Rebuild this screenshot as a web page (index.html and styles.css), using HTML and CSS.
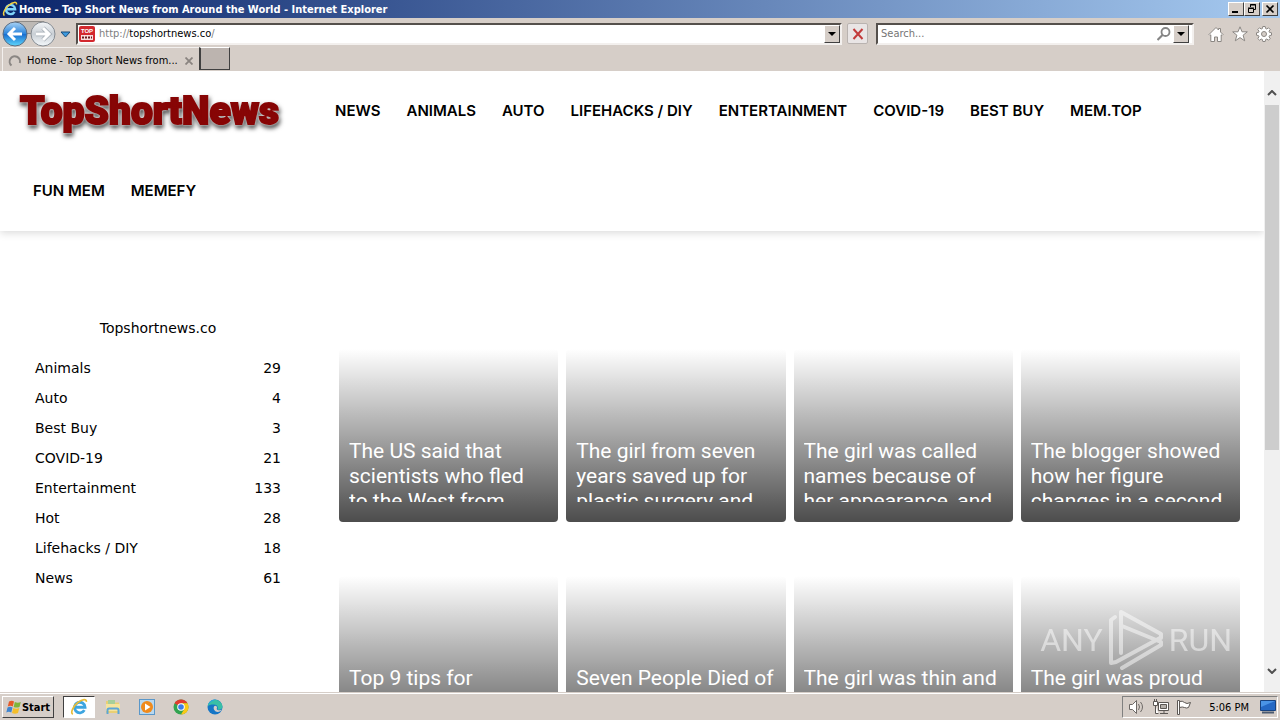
FILE: index.html
```html
<!DOCTYPE html>
<html lang="en">
  <head>
    <meta charset="utf-8" />
    <title>Home - Top Short News from Around the World</title>
    <link rel="stylesheet" href="styles.css">
  </head>

  <body>
    <div class="titlebar">
      <svg class="ie-icon" viewBox="0 0 16 16" width="16" height="16">
        <path d="M12.5 10.8a4.6 4.6 0 1 1 .6-2.6H5" fill="none" stroke="#7fd4fa" stroke-width="2.4" />
        <path d="M2.500 14.500C0 13 3 7 7 4c4-3.200 8-3.600 7.500-.5" fill="none" stroke="#f5d142" stroke-width="1.500" />
      </svg>
      <span class="window-title">Home - Top Short News from Around the World - Internet Explorer</span>
      <div class="window-buttons">
        <button class="win-btn" aria-label="Minimize">
          <svg viewBox="0 0 12 10" width="12" height="10"><path d="M2 7h6v2H2z" /></svg>
        </button>
        <button class="win-btn" aria-label="Restore">
          <svg viewBox="0 0 12 10" width="12" height="10"><path d="M4.500 3V.5h5v5H8M4 1h6M2.500 4.500h5v4h-5zM2 4h6" fill="none" stroke="#000" /></svg>
        </button>
        <button class="win-btn win-close" aria-label="Close">
          <svg viewBox="0 0 12 10" width="12" height="10"><path d="M2.500 1.500l7 7m0-7l-7 7" stroke="#000" stroke-width="1.700" /></svg>
        </button>
      </div>
    </div>

    <div class="toolbar">
      <div class="history">
        <svg viewBox="0 0 74 28" width="74" height="28">
          <defs>
            <linearGradient id="back" x2="0" y2="1">
              <stop offset="0" stop-color="#a9d3f5" />
              <stop offset=".48" stop-color="#2e86dc" />
              <stop offset=".52" stop-color="#1a6fd0" />
              <stop offset="1" stop-color="#5fd8fd" />
            </linearGradient>
            <linearGradient id="fwd" x2="0" y2="1">
              <stop offset="0" stop-color="#f4f6f8" />
              <stop offset=".5" stop-color="#c9cfd5" />
              <stop offset="1" stop-color="#f4f8fb" />
            </linearGradient>
          </defs>
          <path d="M13 1.500h29l-4 12H18z" fill="#bdb9b5" stroke="#918d89" />
          <circle cx="13" cy="14" r="12" fill="url(#back)" stroke="#5c6c80" />
          <path d="M20 14H7m6-6l-6 6 6 6" fill="none" stroke="#fff" stroke-width="3" />
          <circle cx="41" cy="14" r="12" fill="url(#fwd)" stroke="#858b92" />
          <path d="M34 14h13m-6-6l6 6-6 6" fill="none" stroke="#a3abb3" stroke-width="4.500" />
          <path d="M34 14h13m-6-6l6 6-6 6" fill="none" stroke="#fff" stroke-width="3" />
          <path d="M59 12h9l-4.500 5z" fill="#3c9ae0" stroke="#174a78" />
        </svg>
      </div>
      <div class="field address">
        <svg viewBox="0 0 16 16" width="16" height="16">
          <rect width="16" height="16" rx="2" fill="#d3282e" />
          <text x="8" y="7" class="favicon-text">TOP</text>
          <rect x="2" y="9" width="12" height="5" fill="#f7dcdc" />
          <path d="M3 11.500h10" stroke="#6b1a1c" stroke-width="2" stroke-dasharray="2 1" />
        </svg>
        <span class="url" role="textbox" aria-label="Address"><span class="muted">http://</span>topshortnews.co<span class="muted">/</span></span>
        <button class="drop-btn" aria-label="Show address list"><svg viewBox="0 0 8 4" width="8" height="4"><path d="M0 0h8L4 4z" /></svg></button>
      </div>
      <button class="stop-btn" aria-label="Stop">
        <svg viewBox="0 0 12 12" width="12" height="12"><path d="M1.500 1l9 10m0-10l-9 10" stroke="#c23b3b" stroke-width="2" /></svg>
      </button>
      <div class="field search">
        <input type="text" placeholder="Search..." aria-label="Search">
        <svg viewBox="0 0 14 14" width="14" height="14" fill="none" stroke="#858585"><circle cx="8.500" cy="5" r="4" stroke-width="1.800" /><path d="M5.500 8l-5 5" stroke-width="2.200" /></svg>
        <button class="drop-btn" aria-label="Search options"><svg viewBox="0 0 8 4" width="8" height="4"><path d="M0 0h8L4 4z" /></svg></button>
      </div>
      <div class="tools">
        <svg viewBox="0 0 16 16" width="16" height="16"><path d="M1 8.500L8 1.500l2.500 2.500V2.500h2V6L15 8.500l-1 1-.8-.7v6.700H9.500V11h-3v4.500H2.800V8.800l-.8.700z" fill="#fff" stroke="#8b8783" /></svg>
        <svg viewBox="0 0 16 16" width="16" height="16"><path d="M8 .8l2 5h5.300l-4.200 3.400 1.600 5.600L8 11.600l-4.700 3.200 1.600-5.600L.7 5.800H6z" fill="#fff" stroke="#8b8783" /></svg>
        <svg viewBox="0 0 16 16" width="16" height="16" fill="#fff" stroke="#8b8783">
          <path d="M6.800.5h2.400l.4 2 1.200.5 1.700-1.200 1.700 1.700L13 5.200l.5 1.200 2 .4v2.400l-2 .4-.5 1.200 1.200 1.700-1.700 1.700-1.700-1.200-1.200.5-.4 2H6.800l-.4-2-1.200-.5-1.700 1.200-1.700-1.700L3 10.800l-.5-1.200-2-.4V6.800l2-.4L3 5.200 1.800 3.500l1.700-1.700L5.200 3l1.200-.5z" />
          <circle cx="8" cy="8" r="2.500" fill="#d6cec8" />
        </svg>
      </div>
    </div>

    <div class="tabs">
      <div class="tab">
        <svg viewBox="0 0 14 14" width="14" height="14"><path d="M3.500 11.500A5.200 5.200 0 1 1 11.800 9" fill="none" stroke="#8a8683" stroke-width="2" /></svg>
        <span>Home - Top Short News from...</span>
        <button class="tab-close" aria-label="Close tab"><svg viewBox="0 0 8 8" width="8" height="8"><path d="M.5.500l7 7m0-7l-7 7" stroke="#8a8480" stroke-width="1.800" /></svg></button>
      </div>
      <button class="new-tab" aria-label="New tab"></button>
    </div>

    <div class="viewport">
      <div class="page">
        <header class="header">
          <a class="logo" href="#">TopShortNews</a>
          <nav class="menu">
            <a href="#">NEWS</a>
            <a href="#">ANIMALS</a>
            <a href="#">AUTO</a>
            <a href="#">LIFEHACKS / DIY</a>
            <a href="#">ENTERTAINMENT</a>
            <a href="#">COVID-19</a>
            <a href="#">BEST BUY</a>
            <a href="#">MEM.TOP</a>
            <a href="#">FUN MEM</a>
            <a href="#">MEMEFY</a>
          </nav>
        </header>

        <main class="content">
          <aside class="sidebar">
            <h4>Topshortnews.co</h4>
            <ul>
              <li><a href="#">Animals</a><span>29</span></li>
              <li><a href="#">Auto</a><span>4</span></li>
              <li><a href="#">Best Buy</a><span>3</span></li>
              <li><a href="#">COVID-19</a><span>21</span></li>
              <li><a href="#">Entertainment</a><span>133</span></li>
              <li><a href="#">Hot</a><span>28</span></li>
              <li><a href="#">Lifehacks / DIY</a><span>18</span></li>
              <li><a href="#">News</a><span>61</span></li>
            </ul>
          </aside>
          <section class="cards">
            <a class="card" href="#"><h3>The US said that scientists who fled<br>to the West from</h3></a>
            <a class="card" href="#"><h3>The girl from seven years saved up for plastic surgery and</h3></a>
            <a class="card" href="#"><h3>The girl was called names because of her appearance, and</h3></a>
            <a class="card" href="#"><h3>The blogger showed how her figure changes in a second</h3></a>
            <a class="card" href="#"><h3>Top 9 tips for</h3></a>
            <a class="card" href="#"><h3>Seven People Died of</h3></a>
            <a class="card" href="#"><h3>The girl was thin and</h3></a>
            <a class="card" href="#"><h3>The girl was proud</h3></a>
          </section>
        </main>
      </div>

      <div class="scrollbar">
        <svg viewBox="0 0 10 6" width="10" height="6"><path d="M1 5l4-4 4 4" /></svg>
        <div class="thumb"></div>
        <svg viewBox="0 0 10 6" width="10" height="6"><path d="M1 1l4 4 4-4" /></svg>
      </div>

      <div class="watermark">
        <span>ANY</span>
        <svg viewBox="0 0 56 62" width="56" height="62" fill="none" stroke="#fff" stroke-width="4" stroke-linejoin="round" stroke-linecap="round">
          <path d="M7 8L3 11v43l5-1 44-24" />
          <path d="M13 44V3l40 22v4" />
          <path d="M14 17l39 16v3L14 59" />
        </svg>
        <span>RUN</span>
      </div>
    </div>

    <div class="taskbar">
      <button class="start">
        <svg viewBox="0 0 16 16" width="16" height="16">
          <path d="M3 2.500q3-1.500 5 0L6.800 7.500q-2.500-1.300-5 0z" fill="#e65a28" />
          <path d="M8.800 3q3 1.500 6 0l-1.300 5q-3 1.200-5.800 0z" fill="#7fb53a" />
          <path d="M1.500 8.500q2.500-1.300 5 0l-1.200 5q-2.500-1.500-5 0z" fill="#3f85d0" />
          <path d="M7.300 9q3 1.300 6 0L12 14q-3 1.300-6 0z" fill="#f4be2a" />
        </svg>
        Start
      </button>
      <button class="task active" aria-label="Internet Explorer">
        <svg viewBox="0 0 16 16" width="18" height="18">
          <path d="M12.800 10.800a4.700 4.700 0 1 1 .6-2.600H5" fill="none" stroke="#3da5e0" stroke-width="2.500" />
          <path d="M2.500 14.500C0 13 3 7 7 4c4-3.200 8-3.600 7.500-.5" fill="none" stroke="#e8bc38" stroke-width="1.500" />
        </svg>
      </button>
      <button class="task" aria-label="Explorer">
        <svg viewBox="0 0 16 16" width="16" height="16">
          <path d="M1 2h6l1 1.500h6V14H1z" fill="#e9cf74" />
          <path d="M3 1h7v6H3z" fill="#a6cf9a" />
          <path d="M1 5h14v7H1z" fill="#f5e49d" />
          <path d="M2.500 15V11q0-1.500 1.500-1.500h8q1.500 0 1.500 1.500v4" fill="none" stroke="#5ca6d8" stroke-width="2" />
        </svg>
      </button>
      <button class="task" aria-label="Media Player">
        <svg viewBox="0 0 16 16" width="16" height="16">
          <rect x=".5" y=".5" width="15" height="15" fill="#b9d8ef" stroke="#5a97c9" />
          <circle cx="8" cy="8" r="6" fill="#f08a1c" />
          <path d="M6 4.500l5.500 3.500L6 11.500z" fill="#fff" />
        </svg>
      </button>
      <button class="task" aria-label="Chrome">
        <svg viewBox="0 0 16 16" width="16" height="16">
          <circle cx="8" cy="8" r="7.500" fill="#32a350" />
          <path d="M8 8L1.500 4.250A7.500 7.500 0 0 1 14.500 4.250H8z" fill="#e23b2e" />
          <path d="M8 15.500A7.500 7.500 0 0 0 14.500 4.250H8l3.300 5.700z" fill="#fbc916" />
          <circle cx="8" cy="8" r="3.800" fill="#fff" />
          <circle cx="8" cy="8" r="2.800" fill="#3b7de8" />
        </svg>
      </button>
      <button class="task" aria-label="Edge">
        <svg viewBox="0 0 16 16" width="16" height="16">
          <circle cx="8" cy="8" r="7.500" fill="#1676c6" />
          <path d="M.6 7.500a7.500 7.500 0 0 1 14.900 0c0 3-3 3.700-5 3 1-2-.2-5-3.500-5S1.500 6 .6 7.500z" fill="#39bfa6" />
          <path d="M1 6a7.500 7.500 0 0 1 8-5.500Q4 2 1 6z" fill="#2aa9dd" />
          <path d="M7 7.500c1-1.500 3-.6 3 .9 0 .8-.5 1.200-.2 1.900 1 1.600 4 1 5 0-.8 2-2.300 2.700-4 2.700-3 0-5-3.200-3.800-5.500z" fill="#d6cec8" />
        </svg>
      </button>
      <div class="tray">
        <svg viewBox="0 0 18 16" width="18" height="16" fill="#fff" stroke="#6d6966"><path d="M1.500 5.500h3l4-4v13l-4-4h-3z" /><path d="M10.500 5q2 3 0 6M12.500 3q4 5 0 10" fill="none" /></svg>
        <svg viewBox="0 0 18 16" width="18" height="16" fill="#fff" stroke="#5b5754"><path d="M6.500 3.500h10v8h-10z" /><path d="M8.500 5.500h6v4h-6z" fill="#b5b0ab" /><path d="M8 14.500h8m-4-3v3" /><path d="M1.500 2.500h4v4h-4zM3.500 6.500v8h3M2.500 0v2m2-2v2" /></svg>
        <svg viewBox="0 0 18 16" width="18" height="16" fill="#fff" stroke="#5b5754"><path d="M1.500 1.500h2v14h-2zM3.500 2.500q3-1 5 1t6 0l-2 5q-2 1-4 0t-5 0z" /></svg>
        <span class="clock">5:06 PM</span>
        <svg viewBox="0 0 16 14" width="16" height="14"><path d="M.5.500h15v10H.5z" fill="#2468c4" stroke="#17427f" /><path d="M1 1h14L1 7z" fill="#4a94e6" /><path d="M2 12.500h12" stroke="#4b5a70" stroke-width="2" /></svg>
      </div>
    </div>
  </body>
</html>
```
FILE: styles.css
```css
* {
  box-sizing: border-box;
}

body {
  margin: 0;
  height: 100vh;
  display: flex;
  flex-direction: column;
  overflow: hidden;
  background: #fff;
  color: #000;
  font-family: 'DejaVu Sans', Verdana, sans-serif;
  font-size: 14px;
}

button {
  padding: 0;
  border: 0;
  background: none;
  font: inherit;
  display: flex;
  align-items: center;
  justify-content: center;
}

svg {
  display: block;
  flex: none;
}

a {
  color: inherit;
  text-decoration: none;
}

.titlebar,
.toolbar,
.tabs,
.taskbar {
  flex: none;
  display: flex;
  align-items: center;
  background: #d6cec8;
  font-family: 'DejaVu Sans Condensed', Tahoma, sans-serif;
  font-size: 11px;
}

/* window title */
.titlebar {
  height: 18px;
  padding: 0 2px;
  gap: 1px;
  background: linear-gradient(to right, #0a246a, #a6caf0);
  color: #fff;
  font-weight: bold;
}

.window-title {
  flex: 1;
}

.window-buttons {
  display: flex;
}

.win-btn,
.drop-btn {
  width: 16px;
  height: 14px;
  background: #d6cec8;
  border: 1px solid;
  border-color: #fff #404040 #404040 #fff;
}

.win-close {
  margin-left: 2px;
}

/* address row */
.toolbar {
  height: 29px;
  padding: 2px 8px 0 2px;
}

.history {
  width: 74px;
}

.field {
  height: 22px;
  display: flex;
  align-items: center;
  background: #fff;
  border: 2px solid;
  border-color: #55504c #f3f0ee #f3f0ee #55504c;
}

.address {
  flex: 1;
  gap: 4px;
  padding-left: 1px;
}

.favicon-text {
  font: bold 6px 'Liberation Sans', Arial, sans-serif;
  fill: #fff;
  text-anchor: middle;
}

.url {
  flex: 1;
}

.muted {
  color: #808080;
}

.drop-btn {
  height: 18px;
}

.stop-btn {
  width: 21px;
  height: 21px;
  margin: 0 8px 0 5px;
  background: #e9e5e5;
  border: 1px solid #b9b3b0;
  border-radius: 2px;
}

.search {
  width: 318px;
  padding-right: 3px;
  gap: 2px;
}

.search input {
  flex: 1;
  min-width: 0;
  padding: 0 3px;
  border: 0;
  outline: 0;
  font: inherit;
}

.search input::placeholder {
  color: #757575;
}

.tools {
  display: flex;
  gap: 8px;
  margin-left: 14px;
}

/* tab row */
.tabs {
  height: 24px;
  padding-left: 2px;
  align-items: stretch;
}

.tab {
  width: 197px;
  display: flex;
  align-items: center;
  gap: 5px;
  padding: 2px 6px 0 5px;
  border-top: 1px solid #f3f0ee;
  border-left: 1px solid #f3f0ee;
}

.tab span {
  flex: 1;
  white-space: nowrap;
}

.new-tab {
  width: 31px;
  height: 23px;
  background: #bcb4af;
  border: 1px solid;
  border-color: #fff #404040 #404040;
  border-left: 2px solid #404040;
}

/* web page */
.viewport {
  position: relative;
  flex: 1;
  min-height: 0;
  display: flex;
}

.page {
  flex: 1;
  min-width: 0;
  overflow: hidden;
}

.header {
  display: flex;
  flex-wrap: wrap;
  padding: 0 40px 0 20px;
  box-shadow: 0 2px 8px rgba(0, 0, 0, 0.15);
}

.logo {
  width: 302px;
  line-height: 80px;
  color: #870505;
  font-family: Impact, Roboto, sans-serif;
  font-size: 39px;
  font-weight: 900;
  -webkit-text-stroke: 2px #870505;
  filter: drop-shadow(0 0 1px #fff) drop-shadow(1px 3px 2px rgba(0, 0, 0, 0.7));
}

.menu {
  display: contents;
}

.menu a {
  padding: 0 13px;
  line-height: 80px;
  font-family: Inter, Montserrat, sans-serif;
  font-size: 15px;
  font-weight: 600;
}

.content {
  display: flex;
  gap: 58px;
  padding: 82px 24px 0 35px;
}

.sidebar {
  flex: none;
  width: 246px;
}

.sidebar h4 {
  margin: 0 0 10px;
  line-height: 30px;
  font-size: 14px;
  font-weight: normal;
  text-align: center;
}

.sidebar ul {
  margin: 0;
  padding: 0;
  list-style: none;
}

.sidebar li {
  display: flex;
  justify-content: space-between;
  line-height: 30px;
}

.cards {
  flex: 1;
  display: grid;
  grid-template-columns: repeat(4, 1fr);
  gap: 54px 8px;
  padding-top: 36px;
}

.card {
  height: 173px;
  display: flex;
  align-items: flex-end;
  padding: 0 10px 20px;
  border-radius: 4px;
  background: linear-gradient(rgba(0, 0, 0, 0), rgba(0, 0, 0, 0.7));
  color: #fff;
}

.card h3 {
  margin: 0;
  height: 63px;
  overflow: hidden;
  font-family: Roboto, sans-serif;
  font-size: 21px;
  font-weight: 400;
  line-height: 25px;
}

.scrollbar {
  width: 16px;
  display: flex;
  flex-direction: column;
  align-items: center;
  padding: 19px 0 18px;
  background: #f0f0f0;
}

.scrollbar path {
  fill: none;
  stroke: #505050;
  stroke-width: 2;
}

.thumb {
  width: 14px;
  height: 345px;
  margin: 9px 0 auto;
  background: #cdcdcd;
}

.watermark {
  position: absolute;
  right: 48px;
  bottom: 21px;
  display: flex;
  align-items: center;
  gap: 5px;
  color: #fff;
  opacity: 0.5;
  font-family: Roboto, sans-serif;
  font-size: 32px;
  font-weight: 400;
}

/* taskbar */
.taskbar {
  height: 28px;
  padding: 1px 2px 0;
  border-top: 1px solid #d6cec8;
  box-shadow: inset 0 1px #fff;
}

.start {
  width: 52px;
  height: 22px;
  border: 1px solid;
  border-color: #fff #404040 #404040 #fff;
  font-weight: bold;
}

.task {
  width: 34px;
  height: 22px;
}

.active {
  width: 32px;
  margin: 0 1px 0 9px;
  background: #fff;
  border: 1px solid;
  border-color: #404040 #fff #fff #404040;
}

.tray {
  height: 22px;
  display: flex;
  align-items: center;
  gap: 6px;
  margin-left: auto;
  padding: 0 1px 0 5px;
  border: 1px solid;
  border-color: #808080 #fff #fff #808080;
}

.clock {
  margin: 0 5px 0 9px;
}
```
